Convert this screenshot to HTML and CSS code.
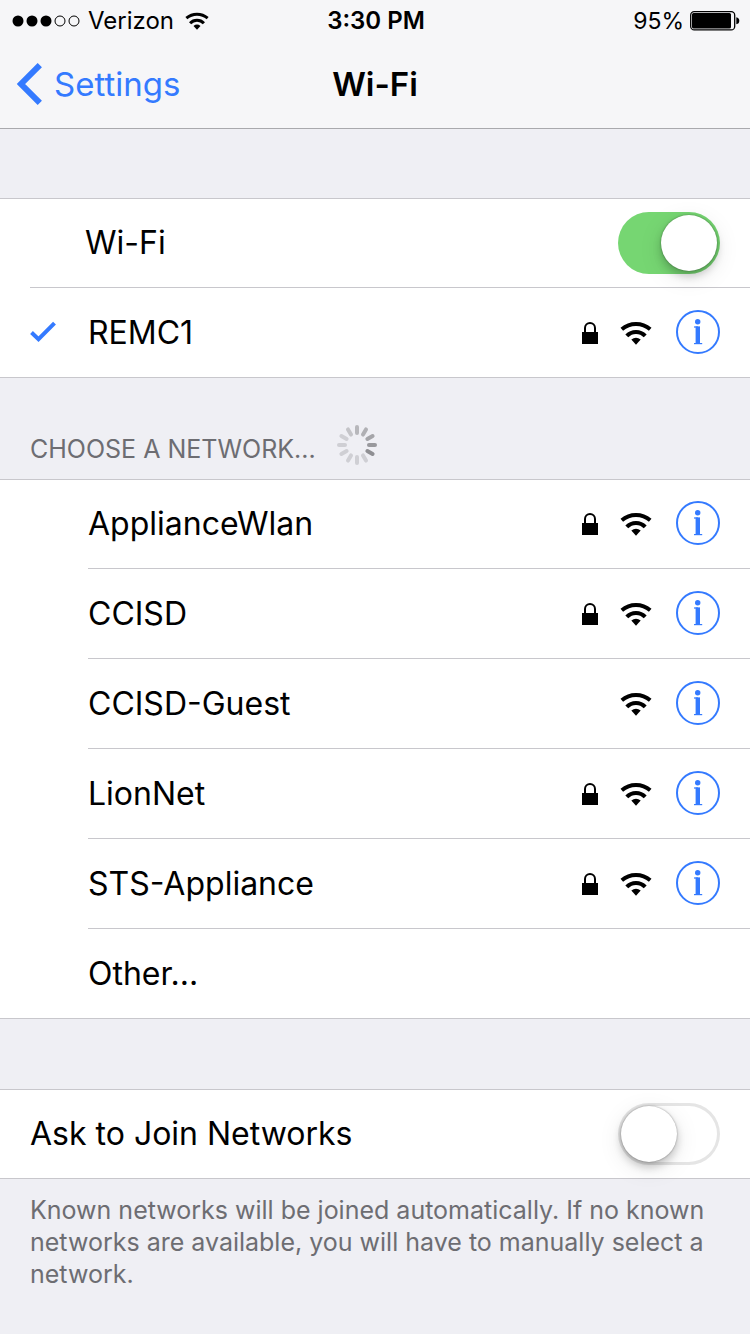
FILE: index.html
```html
<!DOCTYPE html>
<html lang="en">
<head>
<meta charset="utf-8">
<meta name="viewport" content="width=device-width, initial-scale=1">
<title>Wi-Fi</title>
<link rel="stylesheet" href="styles.css">
</head>
<body>
<svg class="sprite" aria-hidden="true">
  <symbol id="wifi" viewBox="0 0 32 24">
    <path d="M1.8 8.3A22 22 0 0 1 30.2 8.3" fill="none" stroke="currentColor" stroke-width="4"/>
    <path d="M6.8 14.9A12.6 12.6 0 0 1 25.2 14.9" fill="none" stroke="currentColor" stroke-width="4"/>
    <path d="M11.3 18.6Q16 14.8 20.7 18.6L16 23.8Z" fill="currentColor"/>
  </symbol>
  <symbol id="lock" viewBox="0 0 16 22">
    <path d="M3 11V6a5 5 0 0 1 10 0v5" fill="none" stroke="currentColor" stroke-width="2"/>
    <rect y="10" width="16" height="12" fill="currentColor"/>
  </symbol>
  <symbol id="info" viewBox="0 0 44 44">
    <circle cx="22" cy="22" r="21" fill="none" stroke="currentColor" stroke-width="2"/>
    <circle cx="21.7" cy="11.8" r="2.7" fill="currentColor"/>
    <rect x="19.6" y="16.4" width="4.4" height="17.6" fill="currentColor"/>
    <rect x="18" y="16.4" width="4" height="1.2" fill="currentColor"/>
    <rect x="18" y="33" width="8.2" height="1.2" fill="currentColor"/>
  </symbol>
</svg>

<header class="top">
  <div class="status">
    <div class="status-left">
      <svg class="signal" viewBox="0 0 68 12" aria-label="Signal 3 of 5">
        <circle cx="6" cy="6" r="5.5"/><circle cx="20" cy="6" r="5.5"/><circle cx="34" cy="6" r="5.5"/>
        <g fill="none" stroke="#000"><circle cx="48" cy="6" r="5"/><circle cx="62" cy="6" r="5"/></g>
      </svg>
      <span>Verizon</span>
      <svg class="status-wifi"><use href="#wifi"/></svg>
    </div>
    <time class="clock">3:30 PM</time>
    <div class="status-right">
      <span>95%</span>
      <svg class="battery" viewBox="0 0 50 20" aria-hidden="true">
        <rect x=".7" y=".7" width="44" height="18.2" rx="3.5" fill="none" stroke="#000" stroke-width="1.3"/>
        <rect x="2" y="2" width="39" height="15.6" rx="1.5"/>
        <path d="M46.3 6.3q3 .5 3 3.5t-3 3.5z"/>
      </svg>
    </div>
  </div>
  <nav class="nav">
    <a class="back" href="#settings">
      <svg class="chevron" viewBox="0 0 26 42" aria-hidden="true"><path d="M23.8 2.2 5 21l18.8 18.8" fill="none" stroke="currentColor" stroke-width="6"/></svg>
      Settings
    </a>
    <h1 class="title">Wi-Fi</h1>
  </nav>
</header>

<main>
  <ul class="group first-group">
    <li class="row main-row">
      <label class="name" for="wifi-on">Wi-Fi</label>
      <input class="switch" type="checkbox" id="wifi-on" checked>
    </li>
    <li class="row joined-row">
      <svg class="check" viewBox="0 0 28 22" aria-label="Connected"><path d="m1.5 11.5 7 6.7L24.5 2.2" fill="none" stroke="currentColor" stroke-width="4"/></svg>
      <button class="name">REMC1</button>
      <svg class="lock"><use href="#lock"/></svg>
      <svg class="wifi"><use href="#wifi"/></svg>
      <button class="info" aria-label="About REMC1"><svg><use href="#info"/></svg></button>
    </li>
  </ul>

  <div class="section-head">
    <h2 class="section-title">CHOOSE A NETWORK...</h2>
    <svg class="spinner" viewBox="-20 -20 40 40" aria-label="Loading">
      <g stroke-width="4" stroke-linecap="round">
        <path d="M0-12V-18" stroke="#b7b7bb"/>
        <path d="M0-12V-18" stroke="#b0b0b4" transform="rotate(30)"/>
        <path d="M0-12V-18" stroke="#a5a5a9" transform="rotate(60)"/>
        <path d="M0-12V-18" stroke="#99999d" transform="rotate(90)"/>
        <path d="M0-12V-18" stroke="#8f8f93" transform="rotate(120)"/>
        <path d="M0-12V-18" stroke="#cfcfd4" transform="rotate(150)"/>
        <path d="M0-12V-18" stroke="#cfcfd4" transform="rotate(180)"/>
        <path d="M0-12V-18" stroke="#cfcfd4" transform="rotate(210)"/>
        <path d="M0-12V-18" stroke="#cfcfd4" transform="rotate(240)"/>
        <path d="M0-12V-18" stroke="#cfcfd4" transform="rotate(270)"/>
        <path d="M0-12V-18" stroke="#cfcfd4" transform="rotate(300)"/>
        <path d="M0-12V-18" stroke="#c4c4c8" transform="rotate(330)"/>
      </g>
    </svg>
  </div>

  <ul class="group">
    <li class="row network">
      <button class="name">ApplianceWlan</button>
      <svg class="lock"><use href="#lock"/></svg>
      <svg class="wifi"><use href="#wifi"/></svg>
      <button class="info" aria-label="About ApplianceWlan"><svg><use href="#info"/></svg></button>
    </li>
    <li class="row network">
      <button class="name">CCISD</button>
      <svg class="lock"><use href="#lock"/></svg>
      <svg class="wifi"><use href="#wifi"/></svg>
      <button class="info" aria-label="About CCISD"><svg><use href="#info"/></svg></button>
    </li>
    <li class="row network">
      <button class="name">CCISD-Guest</button>
      <svg class="wifi"><use href="#wifi"/></svg>
      <button class="info" aria-label="About CCISD-Guest"><svg><use href="#info"/></svg></button>
    </li>
    <li class="row network">
      <button class="name">LionNet</button>
      <svg class="lock"><use href="#lock"/></svg>
      <svg class="wifi"><use href="#wifi"/></svg>
      <button class="info" aria-label="About LionNet"><svg><use href="#info"/></svg></button>
    </li>
    <li class="row network">
      <button class="name">STS-Appliance</button>
      <svg class="lock"><use href="#lock"/></svg>
      <svg class="wifi"><use href="#wifi"/></svg>
      <button class="info" aria-label="About STS-Appliance"><svg><use href="#info"/></svg></button>
    </li>
    <li class="row network">
      <button class="name">Other...</button>
    </li>
  </ul>

  <ul class="group last-group">
    <li class="row ask-row">
      <label class="name" for="ask">Ask to Join Networks</label>
      <input class="switch" type="checkbox" id="ask">
    </li>
  </ul>
  <p class="note">Known networks will be joined automatically. If no known networks are available, you will have to manually select a network.</p>
</main>
</body>
</html>
```

FILE: styles.css
```css
* {
  box-sizing: border-box;
}

body {
  margin: 0;
  background: #efeff4;
  color: #000;
  font-family: Inter, "Liberation Sans", sans-serif;
  font-size: 32px;
  line-height: 40px;
}

svg {
  display: block;
  flex: none;
}

button {
  padding: 0;
  border: 0;
  background: none;
  color: inherit;
  font: inherit;
  text-align: left;
}

.sprite {
  position: absolute;
  width: 0;
  height: 0;
}

.top {
  background: #f6f6f8;
  border-bottom: 1px solid #a9a9ad;
}

.status {
  display: grid;
  grid-template-columns: 1fr auto 1fr;
  align-items: center;
  height: 42px;
  padding: 0 10px 0 12px;
  font-size: 24px;
}

.status-left,
.status-right {
  display: flex;
  align-items: center;
}

.status-right {
  justify-content: flex-end;
  gap: 6px;
  font-size: 23px;
}

.signal {
  width: 68px;
  height: 12px;
  margin-right: 8px;
}

.status-wifi {
  width: 24px;
  height: 18px;
  margin-left: 11px;
}

.clock {
  font-weight: 600;
}

.battery {
  width: 50px;
  height: 20px;
}

.nav {
  display: grid;
  grid-template-columns: 1fr auto 1fr;
  align-items: center;
  height: 86px;
  padding: 0 16px 2px;
  font-size: 33px;
}

.back {
  display: flex;
  align-items: center;
  gap: 12px;
  color: #347aff;
  text-decoration: none;
}

.chevron {
  width: 26px;
  height: 42px;
}

.title {
  margin: 0;
  font-size: 33px;
  font-weight: 600;
}

.group {
  margin: 0;
  padding: 0;
  list-style: none;
  background: #fff;
  border-top: 1px solid #c8c7cc;
  border-bottom: 1px solid #c8c7cc;
}

.first-group {
  margin-top: 69px;
}

.last-group {
  margin-top: 70px;
}

.row {
  display: flex;
  align-items: center;
  min-height: 90px;
  padding-right: 30px;
  border-bottom: 1px solid #c8c7cc;
}

.row:first-child {
  min-height: 89px;
}

.row:last-child {
  min-height: 89px;
  border-bottom: 0;
}

.row:only-child {
  min-height: 88px;
}

.name {
  flex: 1;
}

.main-row {
  margin-left: 30px;
  padding-left: 55px;
}

.joined-row {
  padding-left: 30px;
}

.network {
  margin-left: 88px;
}

.ask-row {
  padding-left: 30px;
}

.check {
  width: 28px;
  height: 22px;
  margin-right: 30px;
  margin-bottom: 2px;
  color: #347aff;
}

.lock {
  width: 16px;
  height: 22px;
  margin-right: 22px;
}

.wifi {
  width: 32px;
  height: 24px;
  margin-right: 24px;
}

.info {
  padding-bottom: 2px;
  color: #347aff;
}

.info svg {
  width: 44px;
  height: 44px;
}

.switch {
  appearance: none;
  width: 102px;
  height: 62px;
  margin: 0;
  padding: 3px;
  border-radius: 31px;
  background: #fff;
  box-shadow: inset 0 0 0 3px #e5e5e5;
}

.switch::before {
  content: "";
  display: block;
  width: 56px;
  height: 56px;
  border-radius: 50%;
  background: #fff;
  box-shadow: 0 0 2px rgba(0, 0, 0, 0.4), 0 5px 8px rgba(0, 0, 0, 0.2), 0 6px 24px rgba(0, 0, 0, 0.1);
}

.switch:checked {
  background: #76d672;
  box-shadow: none;
}

.switch:checked::before {
  margin-left: auto;
}

.section-head {
  display: flex;
  align-items: flex-end;
  gap: 21px;
  height: 101px;
  padding: 0 30px 14px;
  color: #6d6d72;
}

.section-title {
  margin: 0;
  font-size: 25px;
  font-weight: 400;
  line-height: 32px;
}

.spinner {
  width: 40px;
  height: 40px;
}

.note {
  margin: 0;
  padding: 15px 30px;
  color: #6d6d72;
  font-size: 25px;
  line-height: 32px;
}
```
